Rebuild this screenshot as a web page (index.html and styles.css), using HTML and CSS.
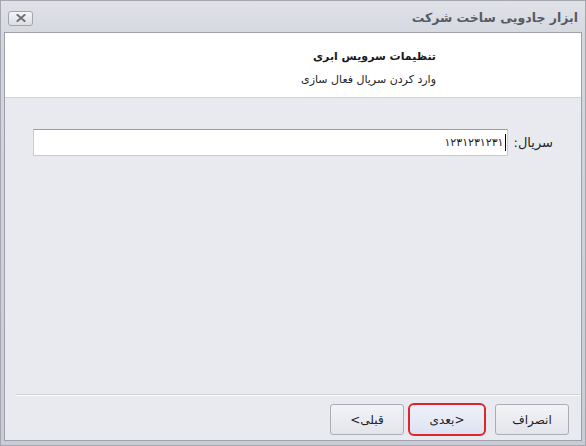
FILE: index.html
```html
<!DOCTYPE html>
<html lang="fa" dir="rtl">
<head>
<meta charset="utf-8">
<link rel="stylesheet" href="styles.css">
</head>
<body>
<div class="window">
  <div class="titlebar">
    <div class="title">ابزار جادویی ساخت شرکت</div>
    <div class="close">
      <svg width="10" height="8" viewBox="0 0 10 8"><path d="M1.5 1 L8.5 7 M8.5 1 L1.5 7" stroke="#6e7078" stroke-width="2" stroke-linecap="square"/></svg>
    </div>
  </div>
  <div class="client">
    <div class="header">
      <div class="h-title">تنظیمات سرویس ابری</div>
      <div class="h-sub">وارد کردن سریال فعال سازی</div>
    </div>
    <div class="content">
      <div class="row">
        <label class="label">سریال:</label>
        <div class="input"><span class="caret"></span><span class="value">۱۲۳۱۲۳۱۲۳۱</span></div>
      </div>
    </div>
    <div class="footer">
      <div class="sep"></div>
      <div class="buttons">
        <div class="btn">انصراف</div>
        <div class="btn btn-focus">&lt;بعدی</div>
        <div class="btn">قبلی&gt;</div>
      </div>
    </div>
  </div>
</div>
</body>
</html>
```
FILE: styles.css
```css
html, body {
  margin: 0;
  padding: 0;
  background: #c4c6ce;
}
body {
  font-family: "DejaVu Sans", "Noto Sans", sans-serif;
}
.window {
  width: 586px;
  height: 446px;
  box-sizing: border-box;
  border: 1px solid #a4a6b0;
  background: linear-gradient(#e0e2e8, #d4d6de 40px, #c9ccd4);
  padding: 0 3px 4px 3px;
  display: flex;
  flex-direction: column;
}
.titlebar {
  height: 31px;
  flex: none;
  display: flex;
  align-items: center;
  justify-content: space-between;
  padding: 0 2px 0 2px;
}
.title {
  font-size: 12.5px;
  font-weight: bold;
  color: #575a62;
  padding-right: 2px;
  padding-top: 1px;
}
.close {
  width: 23px;
  height: 13px;
  border: 1px solid #a2a5ae;
  border-radius: 3px;
  background: linear-gradient(#f4f5f8, #dcdee4);
  display: flex;
  align-items: center;
  justify-content: center;
  margin-left: 2px;
  margin-top: 3px;
}
.close svg { display: block; }
.client {
  flex: 1;
  border: 1px solid #9ea1ab;
  background: #e9eaef;
  display: flex;
  flex-direction: column;
}
.header {
  height: 65px;
  flex: none;
  background: #ffffff;
  border-bottom: 1px solid #d2d3d8;
  padding: 14px 145px 0 0;
  box-sizing: border-box;
}
.h-title {
  font-size: 11px;
  font-weight: bold;
  color: #1a1a1a;
  line-height: 20px;
}
.h-sub {
  font-size: 11px;
  color: #222;
  line-height: 26px;
}
.content {
  flex: 1;
  padding: 31px 28px 0 0;
}
.row {
  display: flex;
  align-items: center;
  gap: 6px;
}
.label {
  font-size: 13px;
  color: #222;
}
.input {
  width: 475px;
  height: 27px;
  box-sizing: border-box;
  background: #fff;
  border: 1px solid #c8cad0;
  border-top-color: #9c9ea6;
  display: flex;
  align-items: center;
  padding-right: 1px;
}
.caret {
  width: 1px;
  height: 17px;
  background: #000;
}
.value {
  font-size: 11px;
  color: #222;
  margin-right: 1px;
}
.footer {
  flex: none;
  height: 46px;
  display: flex;
  flex-direction: column;
}
.sep {
  height: 1px;
  background: #d3d4d9;
  border-bottom: 1px solid #fbfbfc;
  margin-left: 11px;
}
.buttons {
  display: flex;
  padding: 8px 12px 0 0;
}
.btn {
  width: 72px;
  height: 29px;
  border: 1px solid #abadb5;
  border-radius: 3px;
  background: linear-gradient(#f2f3f6, #e4e5ea);
  font-size: 12px;
  color: #222;
  display: flex;
  align-items: center;
  justify-content: center;
}
.btn-focus {
  width: 74px;
  height: 29px;
  border: 2px solid #e0242c;
  border-radius: 6px;
  background: linear-gradient(#eef1fa, #dde3f2);
  margin: -1px 9px 0 4px;
}
```
